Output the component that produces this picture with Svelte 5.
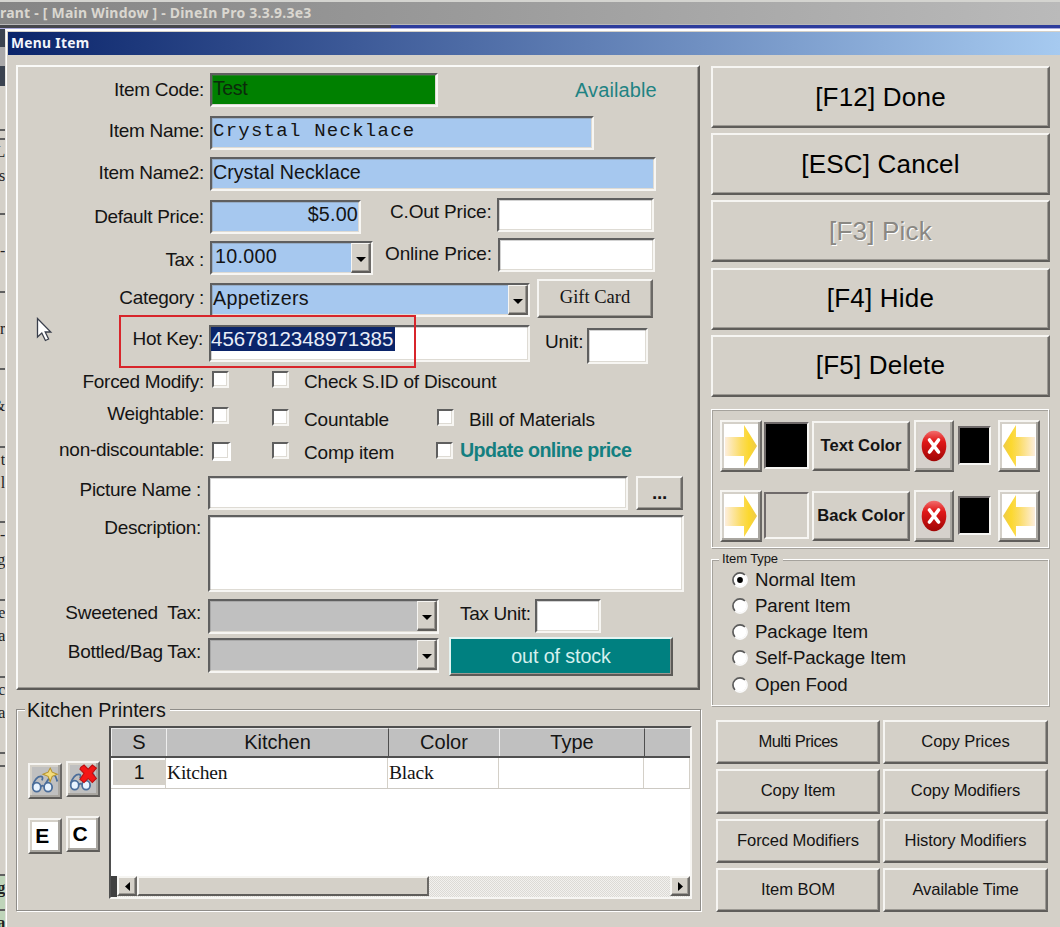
<script lang="ts">
  const actions = [
    { key: "F12", label: "Done" },
    { key: "ESC", label: "Cancel" },
    { key: "F3", label: "Pick", disabled: true },
    { key: "F4", label: "Hide" },
    { key: "F5", label: "Delete" },
  ];

  const itemTypes = ["Normal Item", "Parent Item", "Package Item", "Self-Package Item", "Open Food"];
  let itemType = $state("Normal Item");

  const tools = [
    "Multi Prices",
    "Copy Prices",
    "Copy Item",
    "Copy Modifiers",
    "Forced Modifiers",
    "History Modifiers",
    "Item BOM",
    "Available Time",
  ];

  const colorRows = [
    { label: "Text Color", swatch: "black" },
    { label: "Back Color", swatch: "none" },
  ];

  const printers = [{ kitchen: "Kitchen", color: "Black", type: "" }];

  /** Slivers of the window behind the dialog, top to bottom. */
  const slivers = [
    { height: 18, kind: "dark", text: "" },
    { height: 19, kind: "pale", text: "" },
    { height: 20, kind: "dark", text: "" },
    { height: 5, kind: "", text: "" },
    { height: 22, kind: "grey", text: "n" },
    { height: 16, kind: "", text: "" },
    { height: 9, kind: "rule", text: "" },
    { height: 26, kind: "rule", text: "L" },
    { height: 49, kind: "", text: "s" },
    { height: 26, kind: "rule", text: "" },
    { height: 52, kind: "", text: "-" },
    { height: 26, kind: "rule", text: "" },
    { height: 51, kind: "", text: "r" },
    { height: 26, kind: "rule", text: "" },
    { height: 52, kind: "", text: "&" },
    { height: 25, kind: "rule", text: "t" },
    { height: 50, kind: "", text: "l" },
    { height: 27, kind: "rule", text: "-" },
    { height: 51, kind: "", text: "g" },
    { height: 25, kind: "rule", text: "e" },
    { height: 52, kind: "", text: "a" },
    { height: 25, kind: "rule", text: "c" },
    { height: 51, kind: "", text: "a" },
    { height: 13, kind: "rule", text: "" },
    { height: 109, kind: "rule", text: "" },
    { height: 35, kind: "rule green", text: "g" },
    { height: 20, kind: "rule green", text: "a" },
  ];
</script>

{#snippet combo(cls: string, value: string)}
  <div class="field combo {cls}">
    <span>{value}</span>
    <button type="button" class="drop" aria-label="Open list">
      <svg width="10" height="5"><path d="M0 0h10L5 5z" /></svg>
    </button>
  </div>
{/snippet}

{#snippet arrow(flip: boolean)}
  <button type="button" class="icon-btn arrow" class:flip aria-label="Apply color">
    <svg width="34" height="44" viewBox="0 0 34 44">
      <defs>
        <linearGradient id="gold" x1="0" x2="1">
          <stop offset="0" stop-color="#fdeedd" />
          <stop offset="0.5" stop-color="#fbdc62" />
          <stop offset="0.75" stop-color="#fcd82e" />
          <stop offset="1" stop-color="#edca4c" />
        </linearGradient>
      </defs>
      <path d="M1 13H20V1L33 22L20 43V32H1Z" fill="url(#gold)" />
    </svg>
  </button>
{/snippet}

{#snippet glasses()}
  <g fill="#e9f4ff" stroke="#4a6d9a" stroke-width="1.7">
    <path d="M2 19C4 13 7 10 10 10C12 10 12 12 11 14M14 18C17 13 20 8 23 9C25 10 25 13 26 15" fill="none" />
    <ellipse cx="6" cy="20.5" rx="3.9" ry="4.3" />
    <ellipse cx="17" cy="20.5" rx="3.9" ry="4.3" />
    <path d="M10 20q2-2 3 0" fill="none" />
  </g>
{/snippet}

<div class="screen">
  <header class="main-title">rant - [ Main Window ] - DineIn Pro 3.3.9.3e3</header>
  <div class="main-edge"></div>

  <div class="body">
    <div class="behind">
      {#each slivers as s}
        <div class={s.kind} style="height: {s.height}px">{s.text}</div>
      {/each}
    </div>

    <div class="dialog">
      <div class="dialog-title">Menu Item</div>
      <div class="columns">
        <div class="left">
          <section class="panel">
            <div class="row r-code">
              <span class="label">Item Code:</span>
              <div class="field code">Test</div>
              <span class="available">Available</span>
            </div>
            <div class="row r-name">
              <span class="label">Item Name:</span>
              <div class="field blue name">Crystal Necklace</div>
            </div>
            <div class="row r-name2">
              <span class="label">Item Name2:</span>
              <div class="field blue name2">Crystal Necklace</div>
            </div>
            <div class="row r-price">
              <span class="label">Default Price:</span>
              <div class="field blue price">$5.00</div>
              <span class="side">C.Out Price:</span>
              <div class="field extra"></div>
            </div>
            <div class="row r-tax">
              <span class="label">Tax :</span>
              {@render combo("blue tax", "10.000")}
              <span class="side">Online Price:</span>
              <div class="field extra"></div>
            </div>
            <div class="row r-cat">
              <span class="label">Category :</span>
              {@render combo("blue category", "Appetizers")}
              <button type="button" class="gift">Gift Card</button>
            </div>
            <div class="row r-hot">
              <span class="label">Hot Key:</span>
              <div class="field hot"><mark>4567812348971385</mark></div>
              <span class="side">Unit:</span>
              <div class="field unit"></div>
            </div>
            <div class="row checks r-forced">
              <span class="label">Forced Modify:</span>
              <i class="check"></i>
              <i class="check second"></i>
              <span class="text">Check S.ID of Discount</span>
            </div>
            <div class="row checks r-weight">
              <span class="label">Weightable:</span>
              <i class="check"></i>
              <i class="check second"></i>
              <span class="text">Countable</span>
              <i class="check third"></i>
              <span class="text">Bill of Materials</span>
            </div>
            <div class="row checks r-nodisc">
              <span class="label">non-discountable:</span>
              <i class="check big"></i>
              <i class="check second"></i>
              <span class="text">Comp item</span>
              <i class="check third"></i>
              <span class="update">Update online price</span>
            </div>
            <div class="row low r-pic">
              <span class="label">Picture Name :</span>
              <div class="field picture"></div>
              <button type="button" class="browse">...</button>
            </div>
            <div class="row low r-desc">
              <span class="label">Description:</span>
              <div class="field description"></div>
            </div>
            <div class="row low r-sweet">
              <span class="label">Sweetened&nbsp; Tax:</span>
              {@render combo("grey", "")}
              <span class="side">Tax Unit:</span>
              <div class="field tax-unit"></div>
            </div>
            <div class="row low r-bottle">
              <span class="label">Bottled/Bag Tax:</span>
              {@render combo("grey", "")}
              <button type="button" class="stock">out of stock</button>
            </div>
          </section>

          <section class="kitchen">
            <h2>Kitchen Printers</h2>
            <div class="kitchen-body">
              <div class="printer-tools">
                <button type="button" class="icon-btn silver" aria-label="Add printer">
                  <svg width="30" height="31" viewBox="0 0 28 30">
                    {@render glasses()}
                    <path d="M19 2l2 4 5 2-5 2-2 5-2-5-5-2 5-2z" fill="#f3dc7c" stroke="#b8942c" />
                  </svg>
                </button>
                <button type="button" class="icon-btn silver" aria-label="Remove printer">
                  <svg width="30" height="31" viewBox="0 0 28 30">
                    {@render glasses()}
                    <path
                      d="M12 3l3-2 4 4 4-4 4 3-4 5 4 5-4 4-4-4-4 4-4-3 4-6-4-4z"
                      fill="#f51616"
                      stroke="#b81010"
                    />
                  </svg>
                </button>
                <button type="button" class="icon-btn letter">E</button>
                <button type="button" class="icon-btn letter">C</button>
              </div>

              <div class="grid">
                <div class="grid-row head">
                  <span>S</span><span>Kitchen</span><span>Color</span><span>Type</span><span></span>
                </div>
                {#each printers as printer, i}
                  <div class="grid-row line">
                    <span><b>{i + 1}</b></span>
                    <span>{printer.kitchen}</span>
                    <span>{printer.color}</span>
                    <span>{printer.type}</span>
                    <span></span>
                  </div>
                {/each}
                <div class="hscroll">
                  <button type="button" class="nub" aria-label="Scroll left">
                    <svg width="5" height="9"><path d="M5 0v9L0 4.5z" /></svg>
                  </button>
                  <div class="thumb"></div>
                  <button type="button" class="nub end" aria-label="Scroll right">
                    <svg width="5" height="9"><path d="M0 0v9l5-4.5z" /></svg>
                  </button>
                </div>
              </div>
            </div>
          </section>
        </div>

        <div class="right">
          <div class="actions">
            {#each actions as action}
              <button type="button" disabled={action.disabled}>[{action.key}] {action.label}</button>
            {/each}
          </div>

          <section class="colors">
            {#each colorRows as row}
              <div class="color-row">
                {@render arrow(false)}
                <div class="swatch {row.swatch}"></div>
                <button type="button" class="pick">{row.label}</button>
                <button type="button" class="icon-btn clear" aria-label="Clear color">
                  <svg width="26" height="32" viewBox="0 0 26 32">
                    <defs>
                      <linearGradient id="ball" x1="0" x2="0" y1="0" y2="1">
                        <stop offset="0" stop-color="#f26c6c" />
                        <stop offset="0.35" stop-color="#e01818" />
                        <stop offset="1" stop-color="#a00505" />
                      </linearGradient>
                    </defs>
                    <ellipse cx="13" cy="16" rx="12.3" ry="15.2" fill="url(#ball)" />
                    <path
                      d="M8.5 10L17.5 22M17.5 10L8.5 22"
                      stroke="#fff"
                      stroke-width="3.6"
                      stroke-linecap="round"
                    />
                  </svg>
                </button>
                <div class="swatch black small"></div>
                {@render arrow(true)}
              </div>
            {/each}
          </section>

          <section class="types">
            <h3>Item Type</h3>
            {#each itemTypes as type}
              <button type="button" class="radio" onclick={() => (itemType = type)}>
                <svg width="16" height="16" viewBox="0 0 16 16">
                  <circle cx="8" cy="8" r="6.5" fill="#fff" />
                  <path d="M3 13A7 7 0 0 1 13 3" fill="none" stroke="#5c5c5c" stroke-width="1.7" />
                  <path d="M13 3A7 7 0 0 1 3 13" fill="none" stroke="#fafafa" stroke-width="1.7" />
                  {#if type === itemType}<circle cx="8" cy="8" r="2.9" />{/if}
                </svg>
                {type}
              </button>
            {/each}
          </section>

          <div class="tools">
            {#each tools as tool}
              <button type="button" class:tight={tool === "Multi Prices"}>{tool}</button>
            {/each}
          </div>
        </div>
      </div>
    </div>
  </div>

  <div class="highlight"></div>
  <svg class="cursor" width="17" height="26" viewBox="0 0 17 26">
    <path
      d="M1.5 1.5V20l4.3-4 3.6 7.5 3.2-1.5L9.2 15h5.6z"
      fill="#fff"
      stroke="#3a3f4c"
      stroke-width="1.3"
    />
  </svg>
</div>

<style>
  :global(body) {
    margin: 0;
    background: #d4d0c8;
  }
  .screen {
    position: relative;
    width: 1060px;
    height: 927px;
    overflow: hidden;
    background: #d4d0c8;
    color: #141414;
    font-family: "Liberation Sans", Arial, sans-serif;
    font-size: 19px;
    letter-spacing: -0.3px;
    white-space: nowrap;
  }
  .screen,
  .screen * {
    box-sizing: border-box;
  }
  button {
    display: flex;
    align-items: center;
    justify-content: center;
    flex: none;
    margin: 0;
    padding: 0;
    border: 2px solid;
    border-color: #f6f5f2 #6b6966 #5f5d5a #f6f5f2;
    background: #d4d0c8;
    box-shadow: inset -1px -1px #9c9993;
    color: inherit;
    font: inherit;
    letter-spacing: inherit;
  }

  /* window chrome */
  .main-title {
    height: 24px;
    border-top: 2px solid #d4d4d0;
    background: linear-gradient(90deg, #858585, #9b9b9b 45%, #bababa);
    color: #dad7d0;
    font: bold 14px/21px "Noto Sans", sans-serif;
    letter-spacing: 0.22px;
  }
  .main-edge {
    height: 5px;
    border-top: 1px solid #b9b8b8;
    background: linear-gradient(90deg, #45464b 391px, #2d3c9c 391px);
    border-bottom: 1px solid #a9a9dc;
  }
  .body {
    display: flex;
    height: 898px;
  }
  .behind {
    width: 5px;
    flex: none;
    overflow: hidden;
    color: #222;
    font: 16px/24px "Liberation Serif", serif;
  }
  .behind > div {
    direction: rtl;
    overflow: hidden;
  }
  .behind .dark {
    background: #3b4350;
  }
  .behind .pale {
    background: #aaa9aa;
  }
  .behind .grey {
    background: #858585;
    color: #d4d0c8;
  }
  .behind .rule {
    border-top: 2px solid #606060;
  }
  .behind .green {
    background: #bfd5ba;
    font-weight: bold;
  }
  .dialog {
    flex: 1;
    border-left: 1px solid #e6e4df;
    border-top: 2px solid #fff;
    box-shadow: inset 1px 0 #fff;
    padding: 1px 0 0 2px;
  }
  .dialog-title {
    height: 23px;
    padding-left: 3px;
    background: linear-gradient(90deg, #0a246a, #3d5a98 33%, #7090c2 66%, #a6caf0);
    color: #f3f5fb;
    font: bold 13.8px/22px "Noto Sans", sans-serif;
    letter-spacing: 0.3px;
  }
  .columns {
    display: flex;
    padding-left: 8px;
  }
  .left {
    width: 685px;
    margin-top: 10px;
  }

  /* item form */
  .panel {
    width: 684px;
    height: 625px;
    padding-top: 5px;
    border: 2px solid;
    border-color: #fafaf8 #5c5a57 #5c5a57 #fafaf8;
    box-shadow: inset -1px -1px #9c9993;
  }
  .row {
    display: flex;
    align-items: flex-start;
  }
  .label {
    width: 186px;
    flex: none;
    line-height: 24px;
    text-align: right;
  }
  .low .label {
    width: 183px;
  }
  .field {
    flex: none;
    height: 34px;
    margin-left: 6px;
    padding: 0 1px;
    border: 2px solid;
    border-color: #5f5f5f #f7f6f3 #f7f6f3 #5f5f5f;
    background: #fff;
    box-shadow: inset 1px 1px #77777755, inset -1px -1px #dedbd4;
    font-size: 19.7px;
    line-height: 26px;
    letter-spacing: 0;
  }
  .blue {
    background: #a6c8ef;
  }
  .grey {
    width: 231px;
    height: 35px;
    margin-left: 7px;
    background: #c0c0c0;
  }
  .combo {
    display: flex;
    justify-content: space-between;
    padding-right: 0;
  }
  .drop {
    width: 20px;
    height: 30px;
    border-width: 1px 2px 2px 1px;
  }
  .drop svg {
    margin-top: 3px;
  }
  .side {
    flex: none;
    line-height: 24px;
    letter-spacing: -0.15px;
  }
  .r-code { height: 42px; }
  .r-code .label { margin-top: 6px; }
  .code {
    width: 228px;
    margin-top: 1px;
    background: #008000;
    color: #0b2a0b;
    letter-spacing: -0.5px;
  }
  .available {
    margin: 6px 0 0 137px;
    color: #1f8383;
    font-size: 20px;
    line-height: 25px;
    letter-spacing: 0.1px;
  }
  .r-name { height: 42px; }
  .r-name .label { margin-top: 5px; }
  .name {
    width: 384px;
    margin-top: 2px;
    font-family: "Liberation Mono", monospace;
    font-size: 19px;
    letter-spacing: 1.25px;
  }
  .r-name2 { height: 42px; }
  .r-name2 .label { margin-top: 5px; }
  .name2 {
    width: 446px;
    margin-top: 1px;
  }
  .r-price { height: 40px; }
  .r-price .label { margin-top: 7px; }
  .price {
    width: 151px;
    margin-top: 2px;
    text-align: right;
    line-height: 24px;
    letter-spacing: 0.2px;
  }
  .r-price .side {
    width: 101px;
    margin: 2px 0 0 29px;
  }
  .extra {
    width: 157px;
  }
  .r-tax { height: 41px; }
  .r-tax .label { margin-top: 10px; }
  .tax {
    width: 163px;
    margin-top: 3px;
    padding-left: 3px;
    letter-spacing: 0.3px;
  }
  .r-tax .side {
    width: 107px;
    margin: 4px 0 0 12px;
  }
  .r-cat { height: 42px; }
  .r-cat .label { margin-top: 7px; }
  .category {
    width: 320px;
    margin-top: 4px;
    letter-spacing: 0.3px;
  }
  .gift {
    width: 116px;
    height: 39px;
    margin-left: 7px;
    padding-bottom: 3px;
    font: 18.5px "Liberation Serif", serif;
    letter-spacing: 0;
  }
  .r-hot { height: 46px; }
  .r-hot .label {
    width: 185px;
    margin-top: 6px;
  }
  .hot {
    width: 321px;
    height: 37px;
    margin-top: 4px;
    padding: 0;
  }
  mark {
    display: block;
    width: 184px;
    height: 24px;
    background: #0a246a;
    color: #e8edf7;
    font-size: 20.5px;
    line-height: 24px;
    letter-spacing: 0;
  }
  .r-hot .side {
    width: 36px;
    margin: 9px 0 0 15px;
  }
  .unit {
    width: 61px;
    height: 36px;
    margin-top: 7px;
  }

  .check {
    width: 17px;
    height: 17px;
    flex: none;
    margin-left: 8px;
    border: 2px solid;
    border-color: #5f5f5f #f7f6f3 #f7f6f3 #5f5f5f;
    background: #fff;
    box-shadow: inset -1px -1px #dedbd4;
  }
  .check.second {
    margin-left: 43px;
  }
  .check.big {
    width: 19px;
    height: 19px;
    border-right-width: 3px;
    border-bottom-width: 3px;
    border-right-color: #fff;
    border-bottom-color: #fff;
  }
  .check.big + .second {
    margin-left: 41px;
  }
  .check.third {
    margin-left: 0;
  }
  .checks .text {
    margin-left: 15px;
    line-height: 24px;
    letter-spacing: -0.18px;
  }
  .r-forced { height: 35px; }
  .r-forced .label,
  .r-forced .text { margin-top: 3px; }
  .r-forced .check { margin-top: 4px; }
  .r-weight { height: 36px; }
  .r-weight .check { margin-top: 5px; }
  .r-weight .second,
  .r-weight .third { margin-top: 7px; }
  .r-weight .text { margin-top: 6px; }
  .r-weight .second + .text {
    width: 133px;
  }
  .r-nodisc { height: 36px; }
  .r-nodisc .check { margin-top: 4px; }
  .r-nodisc .text {
    width: 132px;
    margin-top: 3px;
  }
  .update {
    margin-left: 7px;
    color: #137f80;
    font-size: 19.7px;
    font-weight: bold;
    line-height: 24px;
    letter-spacing: -0.6px;
  }

  .r-pic { height: 39px; }
  .r-pic .label { margin-top: 4px; }
  .picture {
    width: 420px;
    margin: 2px 0 0 7px;
  }
  .browse {
    width: 47px;
    height: 34px;
    margin: 2px 0 0 8px;
    font-weight: bold;
  }
  .r-desc { height: 84px; }
  .r-desc .label { margin-top: 3px; }
  .description {
    width: 476px;
    height: 77px;
    margin: 2px 0 0 7px;
  }
  .r-sweet { height: 38px; }
  .r-sweet .label { margin-top: 4px; }
  .r-sweet .grey { margin-top: 2px; }
  .r-sweet .side {
    width: 75px;
    margin: 5px 0 0 21px;
    letter-spacing: -0.35px;
  }
  .tax-unit {
    width: 66px;
    margin: 2px 0 0;
  }
  .r-bottle .label { margin-top: 5px; }
  .r-bottle .grey { margin-top: 3px; }
  .stock {
    width: 224px;
    height: 39px;
    margin: 2px 0 0 10px;
    border-color: #e4f4f2 #5c5a57 #5c5a57 #e4f4f2;
    background: #008080;
    color: #d5f0ee;
    font-size: 19.7px;
    letter-spacing: -0.1px;
  }

  /* kitchen printers */
  .kitchen {
    width: 685px;
    height: 202px;
    margin-top: 19px;
    border: 1px solid #8f8d89;
    box-shadow: 1px 1px #fff, inset 1px 1px #fff;
  }
  h2,
  h3 {
    width: max-content;
    background: #d4d0c8;
    font-weight: normal;
  }
  h2 {
    margin: -12px 0 0 8px;
    padding: 0 4px 0 2px;
    font-size: 19.7px;
    line-height: 24px;
    letter-spacing: 0;
  }
  .kitchen-body {
    display: flex;
    margin-top: 4px;
  }
  .printer-tools {
    display: grid;
    grid-template-columns: 34px 34px;
    grid-template-rows: 36px 36px;
    gap: 19px 4px;
    width: 72px;
    margin: 37px 9px 0 11px;
  }
  .icon-btn {
    width: 34px;
    height: 36px;
    box-shadow: inset -2px -2px #a9a6a0, inset 2px 2px #d4d0c8;
  }
  .silver {
    background: #c0c0c0;
  }
  .letter {
    padding-right: 6px;
    background: #fff;
    color: #000;
    font-size: 21px;
    font-weight: bold;
  }
  .printer-tools button:nth-child(even) {
    margin-top: -2px;
  }
  .grid {
    display: flex;
    flex-direction: column;
    width: 583px;
    height: 173px;
    border: 2px solid;
    border-color: #4f4f4f #f7f6f3 #f7f6f3 #4f4f4f;
    background: #fff;
  }
  .grid-row {
    display: grid;
    grid-template-columns: 55px 222px 111px 145px 46px;
  }
  .head {
    height: 30px;
    background: #c0c0c0;
    border-bottom: 2px solid #4f4f4f;
    font-size: 20px;
    line-height: 26px;
    letter-spacing: 0;
    text-align: center;
  }
  .head span {
    border-left: 1px solid #eee;
    border-top: 1px solid #e6e6e6;
  }
  .head span:nth-child(3),
  .head span:last-child {
    border-left-color: #4f4f4f;
  }
  .line {
    height: 31px;
    border-bottom: 1px solid #ccc9c3;
    font: 19.5px/30px "Liberation Serif", serif;
    letter-spacing: -0.2px;
  }
  .line span {
    border-right: 1px solid #d4d0c8;
    padding-left: 1px;
  }
  .line b {
    display: block;
    height: 25px;
    margin: 2px 0 0 1px;
    background: #d4d0c8;
    font: 19.5px/24px "Liberation Sans", sans-serif;
    text-align: center;
  }
  .hscroll {
    display: flex;
    height: 21px;
    margin-top: auto;
    border-left: 6px solid #404040;
    background: repeating-conic-gradient(#dcdad5 0 25%, #f2f1ee 0 50%) 0 0 / 2px 2px;
  }
  .nub {
    width: 20px;
    height: 20px;
  }
  .nub.end {
    margin-left: auto;
  }
  .thumb {
    width: 292px;
    height: 20px;
    border: 2px solid;
    border-color: #f6f5f2 #6b6966 #5f5d5a #f6f5f2;
    background: #d4d0c8;
  }

  /* right column */
  .right {
    width: 339px;
    margin: 11px 0 0 10px;
  }
  .actions {
    display: flex;
    flex-direction: column;
    gap: 5.2px;
  }
  .actions button {
    height: 62px;
    font-size: 26px;
    letter-spacing: 0.2px;
    color: #000;
  }
  .actions button:disabled {
    color: #8a8883;
    text-shadow: 1px 1px #fff;
  }
  .colors,
  .types {
    width: 338px;
    border: 1px solid #fff;
    box-shadow: 1px 1px #a5a29c, inset 1px 1px #a5a29c;
  }
  .colors {
    height: 139px;
    margin-top: 12px;
    padding: 10px 7px 0 8px;
  }
  .color-row {
    display: flex;
    align-items: center;
    height: 52px;
    margin-bottom: 18px;
  }
  .arrow {
    width: 42px;
    height: 52px;
    background: #fff;
  }
  .flip {
    margin-left: 7px;
  }
  .flip svg {
    transform: scaleX(-1);
  }
  .swatch {
    width: 45px;
    height: 47px;
    margin: 0 3px 0 2px;
    border: 2px solid;
    border-color: #6f6a6a #f7f6f3 #f7f6f3 #6f6a6a;
  }
  .swatch.black {
    background: #000;
  }
  .swatch.small {
    width: 33px;
    height: 39px;
    margin: 0 0 0 4px;
  }
  .pick {
    width: 98px;
    height: 50px;
    font-size: 16.6px;
    font-weight: bold;
    letter-spacing: 0;
  }
  .clear {
    width: 40px;
    height: 52px;
    margin-left: 4px;
    background: #d6d1cc;
  }
  .types {
    height: 147px;
    margin-top: 11px;
  }
  h3 {
    margin: -9px 0 0 7px;
    padding: 0 5px 0 3px;
    font-size: 13px;
    line-height: 16px;
    letter-spacing: -0.1px;
  }
  .radio {
    gap: 7px;
    height: 26px;
    margin-left: 20px;
    border: 0;
    box-shadow: none;
    background: none;
    font-size: 18.7px;
    letter-spacing: -0.1px;
  }
  .radio:last-child {
    margin-top: 1px;
  }
  .tools {
    display: grid;
    grid-template-columns: 164px 165px;
    gap: 5px 3px;
    margin: 14px 0 0 5px;
  }
  .tools button {
    height: 44.4px;
    font-size: 16.6px;
    letter-spacing: -0.1px;
  }
  .tools .tight {
    letter-spacing: -0.55px;
  }

  /* overlays */
  .highlight {
    position: absolute;
    left: 119px;
    top: 315px;
    width: 297px;
    height: 53px;
    border: 2px solid #d8252b;
  }
  .cursor {
    position: absolute;
    left: 36px;
    top: 317px;
  }
</style>
